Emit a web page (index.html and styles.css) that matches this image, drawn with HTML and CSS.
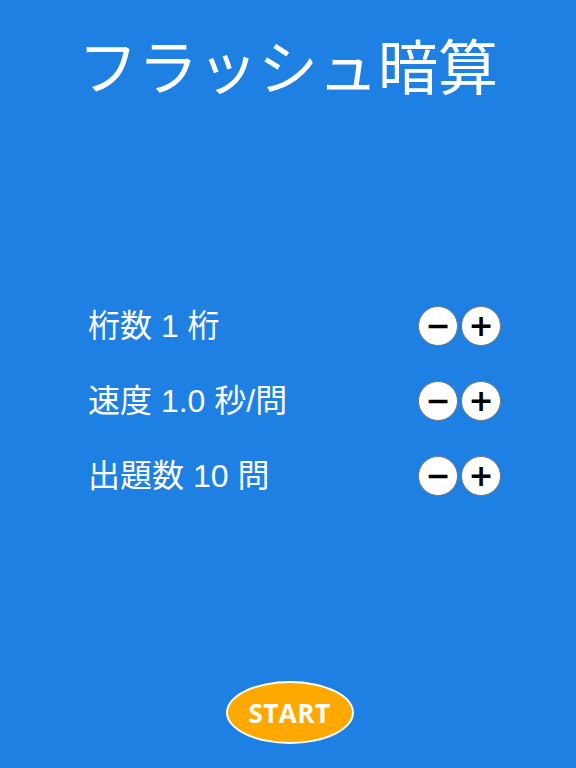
FILE: index.html
```html
<!DOCTYPE html>
<html lang="ja">
<head>
<meta charset="utf-8">
<link rel="stylesheet" href="styles.css">
</head>
<body>
<div class="page">
  <h1 class="title">フラッシュ暗算</h1>
  <div class="settings">
    <div class="row">
      <span class="label">桁数 1 桁</span>
      <div class="btns">
        <button class="circle">−</button>
        <button class="circle">+</button>
      </div>
    </div>
    <div class="row">
      <span class="label">速度 1.0 秒/問</span>
      <div class="btns">
        <button class="circle">−</button>
        <button class="circle">+</button>
      </div>
    </div>
    <div class="row">
      <span class="label">出題数 10 問</span>
      <div class="btns">
        <button class="circle">−</button>
        <button class="circle">+</button>
      </div>
    </div>
  </div>
  <div class="footer">
    <button class="start">START</button>
  </div>
</div>
</body>
</html>
```
FILE: styles.css
```css
html, body {
  margin: 0;
  padding: 0;
}
body {
  background: #1e80e2;
  font-family: "Noto Sans CJK JP", "Noto Sans", sans-serif;
  color: #fff;
}
.page {
  width: 576px;
  height: 768px;
  display: flex;
  flex-direction: column;
  box-sizing: border-box;
}
.title {
  margin: 0;
  padding-top: 24px;
  text-align: center;
  font-size: 60px;
  font-weight: 400;
  line-height: 80px;
  letter-spacing: 0;
}
.settings {
  margin-top: 202px;
  padding: 0 75px 0 88px;
  display: flex;
  flex-direction: column;
  gap: 35px;
}
.row {
  display: flex;
  align-items: center;
  justify-content: space-between;
  height: 40px;
}
.label {
  font-family: "Liberation Sans", "Noto Sans CJK JP", sans-serif;
  font-size: 32px;
  line-height: 40px;
}
.btns {
  display: flex;
  gap: 3px;
}
.circle {
  width: 40px;
  height: 40px;
  border-radius: 50%;
  border: 1px solid #777;
  background: #fff;
  color: #000;
  padding: 0;
  font-family: "DejaVu Sans", sans-serif;
  font-weight: 700;
  font-size: 30px;
  line-height: 38px;
  text-align: center;
}
.footer {
  margin-top: auto;
  padding-bottom: 24px;
  display: flex;
  justify-content: center;
}
.start {
  width: 128px;
  height: 63px;
  border-radius: 50%;
  border: 2px solid #fff;
  background: #ffa800;
  color: #fff;
  font-family: "Open Sans", "Noto Sans", sans-serif;
  font-weight: 700;
  font-size: 26px;
  letter-spacing: 0.5px;
  padding: 0;
  margin-left: 3px;
}
```
